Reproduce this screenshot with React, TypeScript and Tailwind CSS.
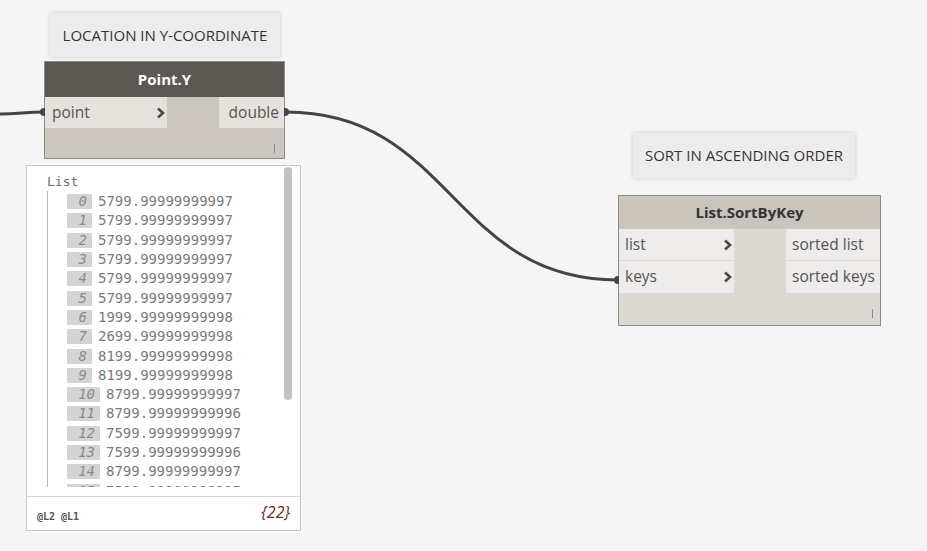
import React from 'react';

const values = [
  '5799.99999999997',
  '5799.99999999997',
  '5799.99999999997',
  '5799.99999999997',
  '5799.99999999997',
  '5799.99999999997',
  '1999.99999999998',
  '2699.99999999998',
  '8199.99999999998',
  '8199.99999999998',
  '8799.99999999997',
  '8799.99999999996',
  '7599.99999999997',
  '7599.99999999996',
  '8799.99999999997',
  '7599.99999999997',
];

function Chevron() {
  return (
    <svg width="9" height="12" viewBox="0 0 9 12" className="shrink-0">
      <polyline points="2,1.5 7,6 2,10.5" fill="none" stroke="#4a4a4a" strokeWidth="2.6" />
    </svg>
  );
}

function Note({ text, className }: { text: string; className: string }) {
  return (
    <div
      className={`absolute flex items-center justify-center bg-[#ececec] text-[15px] text-[#333] shadow-[0_0_4px_rgba(0,0,0,0.18)] ${className}`}
    >
      {text}
    </div>
  );
}

function WatchPanel() {
  return (
    <div className="absolute left-[26px] top-[165px] w-[275px] h-[366px] bg-white border border-[#c6c6c6] flex flex-col">
      <div className="relative h-[330px] font-['DejaVu_Sans_Mono',monospace] text-[14px]">
        <div className="absolute left-[257px] top-[1px] w-[8px] h-[233px] rounded-full bg-[#c2c2c2]" />
        <div className="pl-[20px] pt-[8px] leading-[16px] text-[#6e6e6e] text-[13px]">List</div>
        <div className="ml-[20px] mt-[1px] border-l border-[#b8b8b8] h-[296px] pt-[1px] overflow-hidden">
          {values.map((v, i) => (
            <div key={i} className="flex items-center h-[19.3px] pl-[19px]">
              <div
                className={`h-[15px] bg-[#d4d4d4] text-[#8a8a8a] italic text-right pr-[5px] leading-[15px] ${
                  i < 10 ? 'w-[25px]' : 'w-[33px]'
                }`}
              >
                {i}
              </div>
              <div className="ml-[6px] text-[#7a7a7a] leading-[15px]">{v}</div>
            </div>
          ))}
        </div>
      </div>
      <div className="flex-1 border-t border-[#d4d4d4] flex items-center justify-between pl-[10px] pr-[10px]">
        <span className="font-['DejaVu_Sans_Mono',monospace] text-[10px] font-bold text-[#555] mt-[6px]">@L2 @L1</span>
        <span className="italic text-[16px] text-[#7b2626] -mt-[4px]">{'{22}'}</span>
      </div>
    </div>
  );
}

export default function App() {
  return (
    <div className="relative w-[927px] h-[551px] bg-[#f5f5f5] overflow-hidden font-['Open_Sans',sans-serif]">
      <svg className="absolute inset-0" width="927" height="551">
        <path d="M 0 114 C 20 114, 24 112, 44 112" fill="none" stroke="#444" strokeWidth="3" />
        <path d="M 286 112 C 452 112, 452 280, 618 280" fill="none" stroke="#444" strokeWidth="3" />
      </svg>

      <Note text="LOCATION IN Y-COORDINATE" className="left-[50px] top-[13px] w-[230px] h-[44px]" />
      <Note text="SORT IN ASCENDING ORDER" className="left-[633px] top-[133px] w-[222px] h-[45px]" />

      {/* Point.Y */}
      <div className="absolute left-[44px] top-[61px] w-[241px] h-[98px] border border-[#8e8b86] bg-[#cbc7c0] flex flex-col">
        <div className="h-[35px] bg-[#5b5854] text-white font-bold text-[15px] flex items-center justify-center">
          Point.Y
        </div>
        <div className="h-[31px] flex justify-between">
          <div className="w-[122px] bg-[#e5e2dd] flex items-center justify-between pl-[7px] pr-[2px] text-[15.5px] text-[#555]">
            <span>point</span>
            <Chevron />
          </div>
          <div className="w-[65px] bg-[#e5e2dd] flex items-center justify-end pr-[5px] text-[15.5px] text-[#555]">
            double
          </div>
        </div>
        <div className="flex-1 flex justify-end items-end pr-[9px] pb-[5px]">
          <div className="w-[1px] h-[9px] bg-[#8a8782]" />
        </div>
      </div>
      <div className="absolute left-[40px] top-[108px] w-[5px] h-[8px] rounded-l-full bg-[#444]" />
      <div className="absolute left-[284px] top-[108px] w-[5px] h-[8px] rounded-r-full bg-[#444]" />

      <WatchPanel />

      {/* List.SortByKey */}
      <div className="absolute left-[618px] top-[195px] w-[263px] h-[131px] border border-[#8e8b86] bg-[#dcd9d3] flex flex-col">
        <div className="h-[33px] bg-[#c9c5bd] text-[#333] font-bold text-[15px] flex items-center justify-center">
          List.SortByKey
        </div>
        <div className="flex justify-between">
          <div className="w-[115px] flex flex-col">
            <div className="h-[32px] bg-[#edecea] border-b border-[#dddad5] flex items-center justify-between pl-[6px] pr-[2px] text-[15.5px] text-[#555]">
              <span>list</span>
              <Chevron />
            </div>
            <div className="h-[32px] bg-[#edecea] flex items-center justify-between pl-[6px] pr-[2px] text-[15.5px] text-[#555]">
              <span>keys</span>
              <Chevron />
            </div>
          </div>
          <div className="w-[94px] flex flex-col">
            <div className="h-[32px] bg-[#edecea] border-b border-[#dddad5] flex items-center pl-[6px] text-[15.5px] text-[#555]">
              sorted list
            </div>
            <div className="h-[32px] bg-[#edecea] flex items-center pl-[6px] text-[15.5px] text-[#555]">
              sorted keys
            </div>
          </div>
        </div>
        <div className="flex-1 flex justify-end items-end pr-[7px] pb-[7px]">
          <div className="w-[1px] h-[9px] bg-[#8a8782]" />
        </div>
      </div>
      <div className="absolute left-[614px] top-[276px] w-[5px] h-[8px] rounded-l-full bg-[#444]" />
    </div>
  );
}
